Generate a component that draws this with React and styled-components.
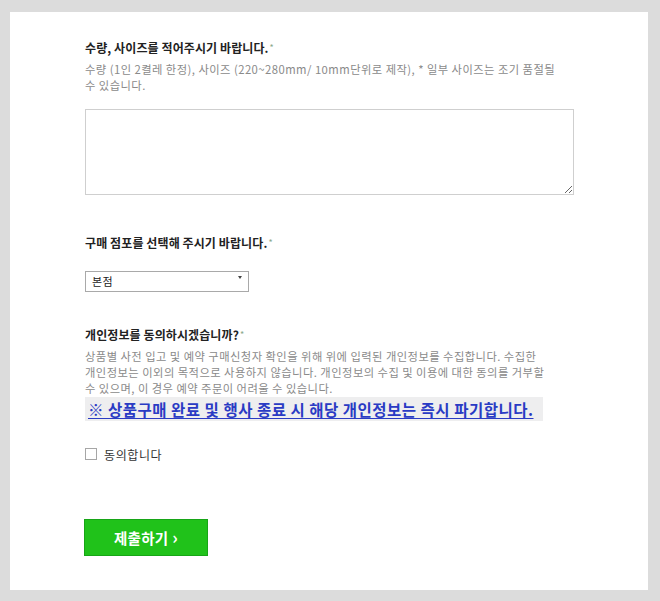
import React from "react"
import styled, { createGlobalStyle } from "styled-components"

const GlobalStyle = createGlobalStyle`
  html, body {
    margin: 0;
    padding: 0;
    background: #dcdcdc;
  }
  body {
    font-family: "Noto Sans CJK KR", "Noto Sans", sans-serif;
  }
`

const Frame = styled.div`
  width: 660px;
  height: 601px;
  box-sizing: border-box;
  padding: 12px 12px 11px 10px;
  background: #dcdcdc;
`

const Panel = styled.div`
  height: 100%;
  box-sizing: border-box;
  padding: 27px 0 0 75px;
  background: #ffffff;
`

const Form = styled.form`
  display: flex;
  flex-direction: column;
  width: 489px;
`

const Heading = styled.h3`
  margin: ${(p) => p.$top || 0}px 0 0;
  font-size: 12px;
  line-height: 18px;
  font-weight: 700;
  letter-spacing: 0.1px;
  color: #222;
`

const Required = styled.span`
  margin-left: 1px;
  font-size: 9px;
  font-weight: 400;
  vertical-align: top;
  color: #8aa88a;
`

const Desc = styled.p`
  margin: 4px 0 0;
  font-size: 11.3px;
  line-height: 16px;
  letter-spacing: 0.45px;
  color: #8a8a8a;
  white-space: nowrap;
`

const TextArea = styled.textarea`
  display: block;
  margin-top: 16px;
  width: 489px;
  height: 86px;
  box-sizing: border-box;
  border: 1px solid #cfcfcf;
  background: #fff;
  font-family: inherit;
`

const SelectWrap = styled.div`
  position: relative;
  margin-top: 15px;
  width: 164px;
  height: 21px;
`

const Select = styled.select`
  appearance: none;
  width: 100%;
  height: 100%;
  box-sizing: border-box;
  padding: 0 0 0 6px;
  border: 1px solid #a9a9a9;
  border-radius: 0;
  background: #fff;
  font-family: inherit;
  font-size: 11px;
  letter-spacing: 0.3px;
  color: #222;
`

const Caret = styled.span`
  position: absolute;
  right: 7px;
  top: 9px;
  width: 0;
  height: 0;
  border-left: 2.5px solid transparent;
  border-right: 2.5px solid transparent;
  border-top: 3px solid #444;
  pointer-events: none;
`

const Notice = styled.a`
  align-self: flex-start;
  margin-top: 1px;
  padding: 0 9px 0 3px;
  height: 24px;
  line-height: 24px;
  background: #eeeeef;
  font-size: 15.5px;
  font-weight: 700;
  letter-spacing: 0.5px;
  color: #2a3bc4;
  text-decoration: underline;
  text-underline-offset: 2px;
`

const CheckRow = styled.label`
  display: flex;
  align-items: center;
  gap: 7px;
  margin-top: 25px;
  height: 16px;
  font-size: 12px;
  letter-spacing: 0.6px;
  color: #333;
`

const CheckBox = styled.input`
  appearance: none;
  margin: 0;
  width: 12px;
  height: 12px;
  box-sizing: border-box;
  border: 1px solid #a6a6a6;
  background: #fff;
`

const Submit = styled.button`
  display: flex;
  align-items: center;
  justify-content: center;
  gap: 4px;
  align-self: flex-start;
  margin-top: 57px;
  margin-left: -1px;
  width: 124px;
  height: 37px;
  border: 1px solid #17a517;
  background: #20c21a;
  color: #fff;
  font-family: inherit;
  font-size: 14.5px;
  font-weight: 700;
  letter-spacing: 0.2px;
  cursor: pointer;
`

const Chevron = styled.span`
  font-size: 17px;
  line-height: 1;
  margin-top: -2px;
`

function App() {
  return (
    <>
      <GlobalStyle />
      <Frame>
        <Panel>
          <Form onSubmit={(e) => e.preventDefault()}>
            <Heading>
              수량, 사이즈를 적어주시기 바랍니다.<Required>*</Required>
            </Heading>
            <Desc>
              수량 (1인 2켤레 한정), 사이즈 (220~280mm/ 10mm단위로 제작), * 일부 사이즈는 조기 품절될
              <br />수 있습니다.
            </Desc>
            <TextArea />

            <Heading $top={39}>
              구매 점포를 선택해 주시기 바랍니다.<Required>*</Required>
            </Heading>
            <SelectWrap>
              <Select defaultValue="본점">
                <option>본점</option>
              </Select>
              <Caret />
            </SelectWrap>

            <Heading $top={38}>
              개인정보를 동의하시겠습니까?<Required>*</Required>
            </Heading>
            <Desc>
              상품별 사전 입고 및 예약 구매신청자 확인을 위해 위에 입력된 개인정보를 수집합니다. 수집한
              <br />개인정보는 이외의 목적으로 사용하지 않습니다. 개인정보의 수집 및 이용에 대한 동의를 거부할
              <br />수 있으며, 이 경우 예약 주문이 어려울 수 있습니다.
            </Desc>
            <Notice href="#">※ 상품구매 완료 및 행사 종료 시 해당 개인정보는 즉시 파기합니다.</Notice>

            <CheckRow>
              <CheckBox type="checkbox" />
              동의합니다
            </CheckRow>

            <Submit type="submit">
              제출하기<Chevron>›</Chevron>
            </Submit>
          </Form>
        </Panel>
      </Frame>
    </>
  )
}

export default App
